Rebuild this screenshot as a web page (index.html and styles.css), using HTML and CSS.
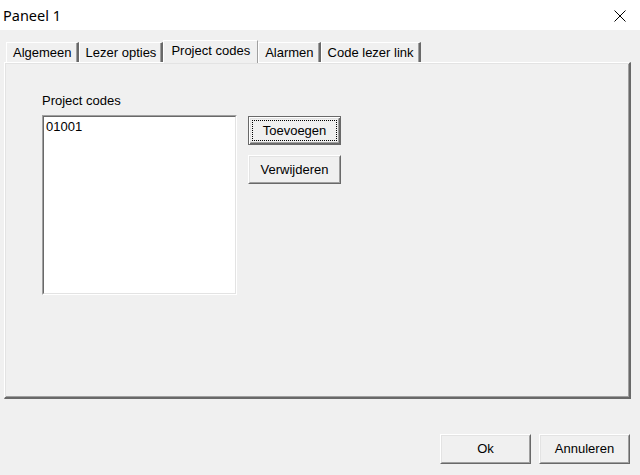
FILE: index.html
```html
<!DOCTYPE html>
<html>
<head>
<meta charset="utf-8">
<link rel="stylesheet" href="styles.css">
</head>
<body>
<div class="window">
  <div class="titlebar">
    <span class="title">Paneel 1</span>
    <svg class="close" width="12" height="12" viewBox="0 0 12 12"><path d="M0.5 0.5 L11.5 11.5 M11.5 0.5 L0.5 11.5" stroke="#000" stroke-width="1" fill="none"/></svg>
  </div>
  <div class="tabs">
    <div class="tab">Algemeen</div>
    <div class="tab">Lezer opties</div>
    <div class="tab selected">Project codes</div>
    <div class="tab">Alarmen</div>
    <div class="tab">Code lezer link</div>
  </div>
  <div class="panel">
    <div class="label">Project codes</div>
    <div class="row">
      <div class="listbox"><div class="listinner"><div class="item">01001</div></div></div>
      <div class="btncol">
        <div class="btn default"><div class="b1"><div class="b2"><span class="focus">Toevoegen</span></div></div></div>
        <div class="btn"><div class="b1"><div class="b2">Verwijderen</div></div></div>
      </div>
    </div>
  </div>
  <div class="footer">
    <div class="btn wide"><div class="b1"><div class="b2">Ok</div></div></div>
    <div class="btn wide"><div class="b1"><div class="b2">Annuleren</div></div></div>
  </div>
</div>
</body>
</html>
```
FILE: styles.css
```css
html, body {
  margin: 0;
  padding: 0;
  background: #f0f0f0;
}
body {
  font-family: "Liberation Sans", Arial, sans-serif;
  font-size: 13px;
  color: #000;
  width: 640px;
  height: 475px;
  overflow: hidden;
}
.titlebar {
  height: 30px;
  background: #fff;
  display: flex;
  align-items: center;
  justify-content: space-between;
  padding: 0 14px 0 3px;
}
.title {
  font-family: "Noto Sans", "Open Sans", sans-serif;
  font-size: 14.5px;
  margin-top: -1px;
}
.close {
  display: block;
  margin-top: 1px;
}
.tabs {
  display: flex;
  align-items: flex-end;
  height: 23px;
  margin-top: 10px;
  padding-left: 6px;
  position: relative;
  z-index: 2;
  margin-bottom: -1px;
}
.tab {
  height: 19px;
  line-height: 19px;
  padding: 0 5px 0 6px;
  border-top: 1px solid #fff;
  border-left: 1px solid #fff;
  border-right: 2px solid #696969;
  box-shadow: inset -1px 0 0 #a0a0a0;
  background: #f0f0f0;
  margin-bottom: 1px;
  white-space: nowrap;
}
.tab.selected {
  height: 22px;
  line-height: 20px;
  margin-bottom: 0;
  padding: 0 7px;
  border-right: 1px solid #a0a0a0;
  box-shadow: none;
}
.panel {
  box-sizing: border-box;
  margin: 0 9px 0 4px;
  height: 337px;
  border-top: 1px solid #fff;
  border-left: 1px solid #fff;
  border-right: 2px solid #696969;
  border-bottom: 2px solid #696969;
  box-shadow: inset 1px 1px 0 #e3e3e3, inset -1px -1px 0 #a0a0a0;
  padding: 30px 0 0 37px;
  position: relative;
  z-index: 1;
}
.label {
  line-height: 16px;
}
.row {
  display: flex;
  margin-top: 6px;
}
.listbox {
  width: 193px;
  height: 178px;
  border-top: 1px solid #a0a0a0;
  border-left: 1px solid #a0a0a0;
  border-right: 1px solid #fff;
  border-bottom: 1px solid #fff;
}
.listinner {
  height: 176px;
  background: #fff;
  border-top: 1px solid #696969;
  border-left: 1px solid #696969;
  border-right: 1px solid #e3e3e3;
  border-bottom: 1px solid #e3e3e3;
}
.item {
  padding: 2px 0 0 2px;
  line-height: 15px;
}
.btncol {
  display: flex;
  flex-direction: column;
  gap: 10px;
  margin-left: 11px;
  margin-top: 1px;
}
.btn {
  width: 93px;
  height: 29px;
  box-sizing: border-box;
  border-top: 1px solid #fff;
  border-left: 1px solid #fff;
  border-right: 1px solid #696969;
  border-bottom: 1px solid #696969;
  background: #f0f0f0;
}
.btn .b1 {
  height: 100%;
  box-sizing: border-box;
  border-top: 1px solid #e3e3e3;
  border-left: 1px solid #e3e3e3;
  border-right: 1px solid #a0a0a0;
  border-bottom: 1px solid #a0a0a0;
}
.btn .b2 {
  height: 100%;
  display: flex;
  align-items: center;
  justify-content: center;
  padding-bottom: 1px;
  box-sizing: border-box;
}
.btn.default {
  border: 1px solid #696969;
  box-shadow: inset 1px 1px 0 #fff, inset -1px -1px 0 #696969;
}
.btn.default .b1 {
  margin: 1px;
  height: calc(100% - 2px);
}
.btn.default .b2 {
  margin: 1px;
  height: calc(100% - 2px);
  border: 1px dotted #000;
}
.footer {
  display: flex;
  justify-content: flex-end;
  gap: 8px;
  margin-top: 35px;
  padding-right: 10px;
}
.btn.wide {
  width: 91px;
  height: 30px;
}
```
